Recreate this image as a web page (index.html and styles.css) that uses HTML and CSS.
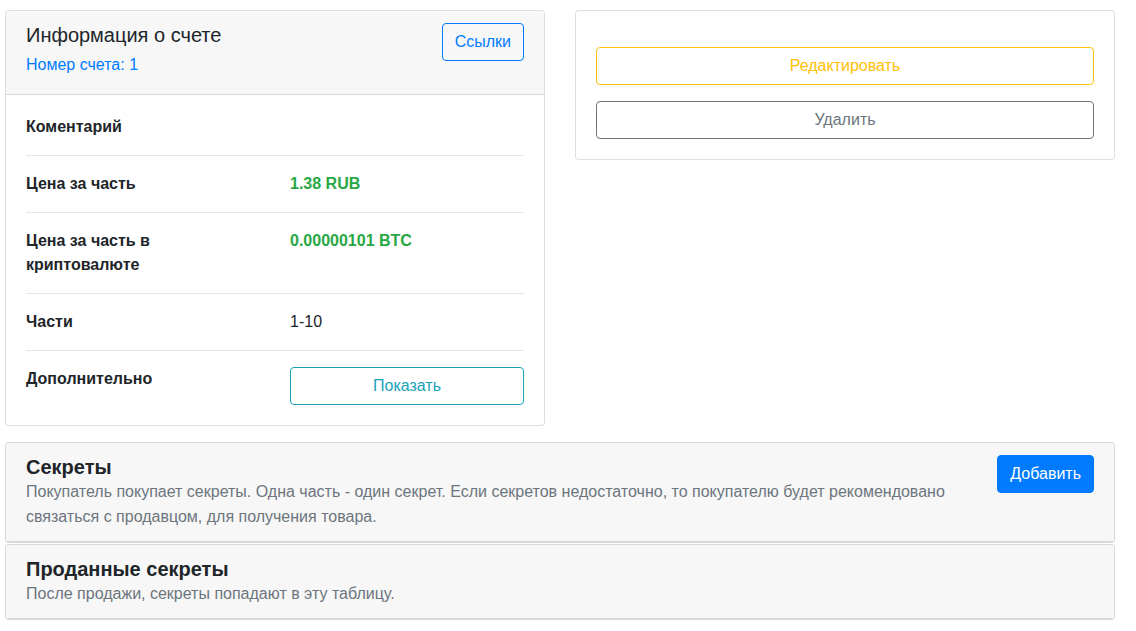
FILE: index.html
```html
<!DOCTYPE html>
<html lang="ru">
<head>
<meta charset="utf-8">
<title>Информация о счете</title>
<link rel="stylesheet" href="styles.css">
</head>
<body>
<div class="page">
  <div class="top-row">
    <div class="card">
      <div class="card-header info-header">
        <div class="header-text">
          <div class="title">Информация о счете</div>
          <div class="subtitle">Номер счета: 1</div>
        </div>
        <button class="btn btn-outline-primary btn-links">Ссылки</button>
      </div>
      <div class="card-body">
        <div class="info-row">
          <div class="label">Коментарий</div>
          <div class="value"></div>
        </div>
        <div class="info-row">
          <div class="label">Цена за часть</div>
          <div class="value green">1.38 RUB</div>
        </div>
        <div class="info-row">
          <div class="label">Цена за часть в криптовалюте</div>
          <div class="value green">0.00000101 BTC</div>
        </div>
        <div class="info-row">
          <div class="label">Части</div>
          <div class="value">1-10</div>
        </div>
        <div class="info-row">
          <div class="label">Дополнительно</div>
          <div class="value"><button class="btn btn-outline-info btn-block">Показать</button></div>
        </div>
      </div>
    </div>
    <div class="card card-actions">
      <div class="card-body actions">
        <button class="btn btn-outline-warning btn-block">Редактировать</button>
        <button class="btn btn-outline-secondary btn-block">Удалить</button>
      </div>
    </div>
  </div>

  <div class="card section-card first">
    <div class="card-header section-header">
      <div class="section-text">
        <div class="section-title">Секреты</div>
        <div class="section-desc">Покупатель покупает секреты. Одна часть - один секрет. Если секретов недостаточно, то покупателю будет рекомендовано связаться с продавцом, для получения товара.</div>
      </div>
      <button class="btn btn-primary">Добавить</button>
    </div>
  </div>
  <div class="card section-card second">
    <div class="card-header section-header">
      <div class="section-text">
        <div class="section-title">Проданные секреты</div>
        <div class="section-desc">После продажи, секреты попадают в эту таблицу.</div>
      </div>
    </div>
  </div>
</div>
</body>
</html>
```

FILE: styles.css
```css
* { box-sizing: border-box; }
html, body { margin: 0; padding: 0; background: #fff; }
body {
  font-family: "Liberation Sans", Arial, sans-serif;
  font-size: 16px;
  line-height: 24px;
  color: #212529;
}
.page {
  width: 1110px;
  margin-left: 5px;
  padding-top: 10px;
}
.top-row {
  display: grid;
  grid-template-columns: 540px 540px;
  column-gap: 30px;
  align-items: start;
}
.card {
  border: 1px solid rgba(0,0,0,.125);
  border-radius: 4px;
  background: #fff;
  overflow: hidden;
}
.card-header {
  background: #f7f7f7;
  border-bottom: 1px solid rgba(0,0,0,.125);
}
.info-header {
  display: flex;
  justify-content: space-between;
  align-items: flex-start;
  padding: 12px 20px 17px;
}
.title { font-size: 20px; line-height: 24px; }
.subtitle { color: #007bff; margin-top: 6px; }
.btn-links { padding-left: 13px; }
.card-body { padding: 20px; }
.info-row {
  display: grid;
  grid-template-columns: 234px 234px;
  column-gap: 30px;
  padding: 16px 0;
  border-top: 1px solid rgba(0,0,0,.1);
}
.info-row:first-child { border-top: 0; padding-top: 0; }
.info-row:last-child { padding-bottom: 0; }
.label { font-weight: bold; }
.green { color: #28a745; font-weight: bold; }
.btn {
  font-family: inherit;
  font-size: 16px;
  line-height: 24px;
  padding: 6px 12px;
  border: 1px solid transparent;
  border-radius: 4px;
  background: transparent;
  cursor: pointer;
  display: inline-block;
  text-align: center;
}
.btn-block { display: block; width: 100%; }
.btn-outline-primary { color: #007bff; border-color: #007bff; }
.btn-outline-info { color: #17a2b8; border-color: #17a2b8; }
.btn-outline-warning { color: #ffc107; border-color: #ffc107; }
.btn-outline-secondary { color: #6c757d; border-color: #6c757d; }
.btn-primary { color: #fff; background: #007bff; border-color: #007bff; }
.actions {
  display: flex;
  flex-direction: column;
  gap: 16px;
  padding-top: 36px;
}
.section-card { background: #f7f7f7; }
.section-card.first { margin-top: 16px; }
.section-card.second { margin-top: 1px; }
.section-header {
  display: flex;
  align-items: flex-start;
  gap: 16px;
  padding: 12px 20px;
}
.section-text { flex: 1; }
.section-title { font-size: 20px; line-height: 24px; font-weight: bold; }
.section-desc { color: #6c757d; line-height: 25px; }
```
